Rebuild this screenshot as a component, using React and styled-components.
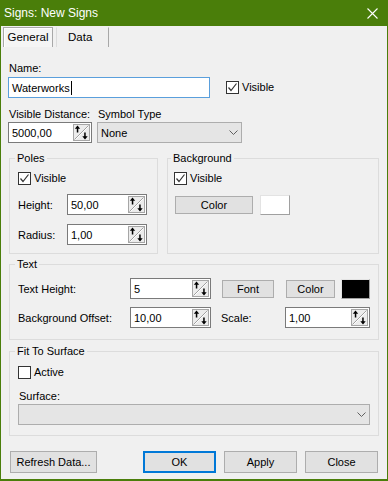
import React from "react";
import styled, { createGlobalStyle } from "styled-components";

const GREEN = "#4a7e0a";

const GlobalStyle = createGlobalStyle`
  html, body { margin: 0; padding: 0; }
  body {
    font-family: "Liberation Sans", Arial, sans-serif;
    font-size: 11px;
    color: #000;
    background: #f0f0f0;
  }
  * { box-sizing: border-box; }
`;

const Window = styled.div`
  width: 388px;
  height: 481px;
  display: flex;
  flex-direction: column;
  background: #f0f0f0;
  border: 1px solid ${GREEN};
  border-top: none;
  border-bottom-width: 2px;
`;

const TitleBar = styled.div`
  height: 26px;
  flex: none;
  background: ${GREEN};
  display: flex;
  align-items: center;
  justify-content: space-between;
  padding: 0 9px 0 3px;
  color: #fff;
`;

const Title = styled.span`
  font-size: 12px;
  line-height: 15px;
`;

const TabStrip = styled.div`
  height: 21px;
  flex: none;
  display: flex;
  padding: 1px 0 0 2px;
`;

const Tab = styled.div`
  height: 20px;
  line-height: 19px;
  width: ${(p) => p.$w}px;
  margin-left: ${(p) => (p.$active ? 0 : 3)}px;
  text-align: ${(p) => (p.$active ? "center" : "left")};
  padding-left: ${(p) => (p.$active ? 0 : 11)}px;
  border: 1px solid ${(p) => (p.$active ? "#a8a8a8" : "transparent")};
  border-left-color: ${(p) => (p.$active ? "#a8a8a8" : "#dcdcdc")};
  border-right-color: #a8a8a8;
  border-bottom: none;
  background: ${(p) => (p.$active ? "#f5f5f5" : "#f0f0f0")};
  box-shadow: ${(p) => (p.$active ? "inset 1px 1px 0 #fff" : "none")};
  font-size: 11.5px;
`;

const Page = styled.div`
  display: flex;
  flex-direction: column;
  padding: 14px 7px 0 7px;
`;

const FieldLabel = styled.div`
  line-height: 15px;
  height: 15px;
  padding-left: 1px;
  margin-top: ${(p) => p.$mt || 0}px;
  white-space: nowrap;
`;

const Row = styled.div`
  display: flex;
  align-items: ${(p) => p.$align || "center"};
  gap: ${(p) => p.$gap || 0}px;
  margin-top: ${(p) => p.$mt || 0}px;
  margin-left: ${(p) => p.$ml || 0}px;
`;

const Column = styled.div`
  width: ${(p) => p.$w}px;
  flex: none;
  display: flex;
  flex-direction: column;
`;

const TextBox = styled.div`
  width: ${(p) => p.$w}px;
  height: 21px;
  flex: none;
  display: flex;
  align-items: center;
  padding-left: 3px;
  background: #fff;
  border: 1px solid ${(p) => (p.$focus ? "#5a9fdc" : "#7a7a7a")};
  white-space: nowrap;
`;

const Caret = styled.span`
  display: inline-block;
  width: 1px;
  height: 14px;
  margin-left: 1px;
  background: #000;
`;

const SpinValue = styled.span`
  flex: 1;
`;

const SpinHolder = styled.span`
  display: flex;
  margin-right: 1px;
`;

const Combo = styled.div`
  width: ${(p) => p.$w}px;
  height: 21px;
  display: flex;
  align-items: center;
  justify-content: space-between;
  padding: 0 3px 0 3px;
  background: #e5e5e5;
  border: 1px solid #adadad;
`;

const CheckLabel = styled.div`
  display: inline-flex;
  align-items: center;
  gap: 3px;
  height: 13px;
  line-height: 13px;
  margin-left: ${(p) => p.$ml || 0}px;
  margin-top: ${(p) => p.$mt || 0}px;
`;

const CheckBox = styled.span`
  width: 13px;
  height: 13px;
  flex: none;
  display: flex;
  background: #fff;
  border: 1px solid #333;
`;

const Group = styled.fieldset`
  margin: ${(p) => p.$mt || 0}px 0 0 0;
  padding: 0 8px ${(p) => p.$pb}px ${(p) => p.$pl || 8}px;
  width: ${(p) => p.$w}px;
  min-width: 0;
  border: 1px solid #dcdcdc;
  display: flex;
  flex-direction: column;
`;

const Legend = styled.legend`
  padding: 0 2px;
  margin-left: -3px;
  line-height: 15px;
`;

const GroupRow = styled.div`
  display: flex;
  align-items: stretch;
  gap: 9px;
  margin: 8px 0 0 1px;
`;

const WideGroups = styled.div`
  display: flex;
  flex-direction: column;
  margin-left: 1px;
`;

const InlineLabel = styled.span`
  width: ${(p) => p.$w}px;
  flex: none;
  margin-left: ${(p) => p.$ml || 0}px;
  white-space: nowrap;
`;

const PushButton = styled.div`
  width: ${(p) => p.$w}px;
  height: ${(p) => p.$h || 18}px;
  flex: none;
  display: flex;
  align-items: center;
  justify-content: center;
  margin-left: ${(p) => p.$ml || 0}px;
  background: #e1e1e1;
  border: 1px solid ${(p) => (p.$default ? "#0078d7" : "#adadad")};
  box-shadow: ${(p) => (p.$default ? "inset 0 0 0 1px #0078d7" : "none")};
  white-space: nowrap;
`;

const Swatch = styled.div`
  width: ${(p) => p.$w}px;
  height: 20px;
  flex: none;
  margin-left: ${(p) => p.$ml || 0}px;
  background: ${(p) => p.$color};
  border: 1px solid;
  border-color: #e3e3e3 #a0a0a0 #a0a0a0 #e3e3e3;
`;

const ButtonBar = styled.div`
  display: flex;
  justify-content: space-between;
  margin-top: 15px;
  padding: 0 9px;
`;

const ButtonGroup = styled.div`
  display: flex;
  gap: 8px;
`;

const CloseIcon = () => (
  <svg width="11" height="11" viewBox="0 0 11 11">
    <path d="M0.5 0.5 L10.5 10.5 M10.5 0.5 L0.5 10.5" stroke="#fff" strokeWidth="1.1" />
  </svg>
);

const SpinArrows = () => (
  <svg width="17" height="17" viewBox="0 0 17 17">
    <rect x="0.5" y="0.5" width="16" height="16" fill="#ececec" stroke="#a6a6a6" />
    <line x1="1.5" y1="15.5" x2="15.5" y2="1.5" stroke="#a0a0a0" />
    <line x1="2.5" y1="15.5" x2="15.5" y2="2.5" stroke="#fff" />
    <path d="M4.5 1.5 L1.8 4.8 H7.2 Z" fill="#000" />
    <rect x="3.8" y="4" width="1.5" height="4.5" fill="#000" />
    <rect x="11.2" y="8.5" width="1.5" height="4.5" fill="#000" />
    <path d="M12 15.5 L9.3 12.2 H14.7 Z" fill="#000" />
  </svg>
);

const Chevron = () => (
  <svg width="9" height="5" viewBox="0 0 9 5">
    <polyline points="0.5,0.5 4.5,4.5 8.5,0.5" fill="none" stroke="#606060" />
  </svg>
);

const Check = ({ checked, children, ml, mt }) => (
  <CheckLabel $ml={ml} $mt={mt}>
    <CheckBox>
      {checked && (
        <svg width="11" height="11" viewBox="0 0 11 11">
          <polyline points="1.5,5.5 4,8.5 9.5,1.5" fill="none" stroke="#333" strokeWidth="1.2" />
        </svg>
      )}
    </CheckBox>
    {children}
  </CheckLabel>
);

const SpinBox = ({ w, value }) => (
  <TextBox $w={w}>
    <SpinValue>{value}</SpinValue>
    <SpinHolder>
      <SpinArrows />
    </SpinHolder>
  </TextBox>
);

export default function App() {
  return (
    <>
      <GlobalStyle />
      <Window>
        <TitleBar>
          <Title>Signs: New Signs</Title>
          <CloseIcon />
        </TitleBar>
        <TabStrip>
          <Tab $active $w={50}>General</Tab>
          <Tab $w={53}>Data</Tab>
        </TabStrip>
        <Page>
          <FieldLabel>Name:</FieldLabel>
          <Row $mt={1}>
            <TextBox $w={202} $focus>
              Waterworks
              <Caret />
            </TextBox>
            <Check checked ml={16}>Visible</Check>
          </Row>
          <Row $mt={9} $gap={5} $align="flex-start">
            <Column $w={84}>
              <FieldLabel>Visible Distance:</FieldLabel>
              <SpinBox w={84} value="5000,00" />
            </Column>
            <Column $w={145}>
              <FieldLabel>Symbol Type</FieldLabel>
              <Combo $w={145}>
                <span>None</span>
                <Chevron />
              </Combo>
            </Column>
          </Row>

          <GroupRow>
            <Group $w={149} $pb={8}>
              <Legend>Poles</Legend>
              <Check checked mt={6}>Visible</Check>
              <Row $mt={9}>
                <InlineLabel $w={49}>Height:</InlineLabel>
                <SpinBox w={80} value="50,00" />
              </Row>
              <Row $mt={9}>
                <InlineLabel $w={49}>Radius:</InlineLabel>
                <SpinBox w={80} value="1,00" />
              </Row>
            </Group>
            <Group $w={212} $pb={8} $pl={6}>
              <Legend>Background</Legend>
              <Check checked mt={6}>Visible</Check>
              <Row $mt={10} $ml={1}>
                <PushButton $w={78}>Color</PushButton>
                <Swatch $w={30} $ml={7} $color="#fff" />
              </Row>
            </Group>
          </GroupRow>

          <WideGroups>
            <Group $w={370} $pb={11} $mt={3}>
              <Legend>Text</Legend>
              <Row $mt={6}>
                <InlineLabel $w={112}>Text Height:</InlineLabel>
                <SpinBox w={81} value="5" />
                <PushButton $w={52} $ml={11}>Font</PushButton>
                <PushButton $w={49} $ml={12}>Color</PushButton>
                <Swatch $w={29} $ml={6} $color="#000" />
              </Row>
              <Row $mt={8}>
                <InlineLabel $w={112}>Background Offset:</InlineLabel>
                <SpinBox w={81} value="10,00" />
                <InlineLabel $w={64} $ml={10}>Scale:</InlineLabel>
                <SpinBox w={85} value="1,00" />
              </Row>
            </Group>

            <Group $w={370} $pb={10} $mt={4}>
              <Legend>Fit To Surface</Legend>
              <Check mt={7}>Active</Check>
              <FieldLabel $mt={10}>Surface:</FieldLabel>
              <Combo $w={352}>
                <span />
                <Chevron />
              </Combo>
            </Group>
          </WideGroups>
        </Page>

        <ButtonBar>
          <PushButton $w={87} $h={22}>Refresh Data...</PushButton>
          <ButtonGroup>
            <PushButton $w={73} $h={22} $default>OK</PushButton>
            <PushButton $w={73} $h={22}>Apply</PushButton>
            <PushButton $w={73} $h={22}>Close</PushButton>
          </ButtonGroup>
        </ButtonBar>
      </Window>
    </>
  );
}
